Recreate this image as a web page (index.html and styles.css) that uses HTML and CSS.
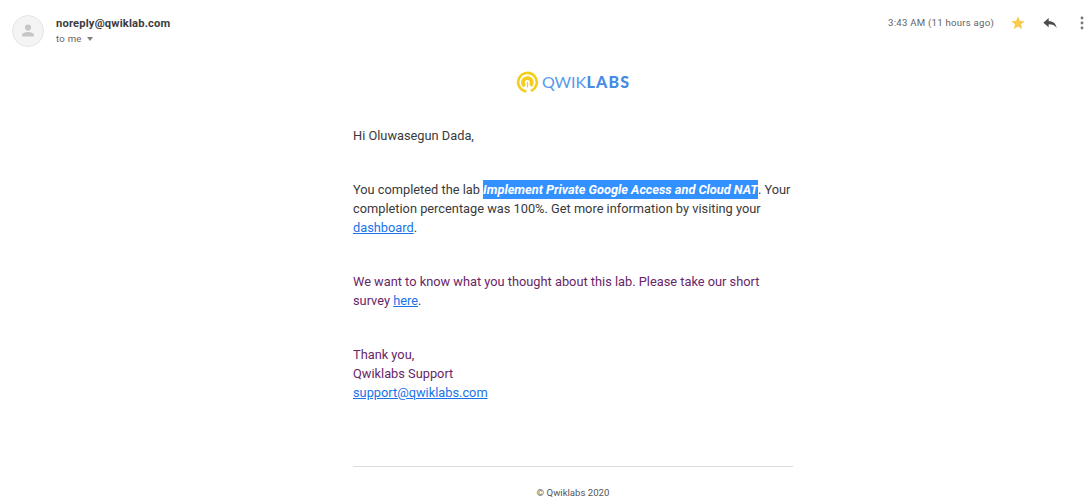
FILE: index.html
```html
<!DOCTYPE html>
<html lang="en">
<head>
<meta charset="utf-8">
<title>Lab completed</title>
<link rel="stylesheet" href="styles.css">
</head>
<body>
<header class="mail-header">
  <div class="avatar">
    <svg width="16" height="16" viewBox="0 0 16 16"><circle cx="8" cy="4.6" r="3.1"/><path d="M2 13.6v-1.3C2 10 5.5 9 8 9s6 1 6 3.300v1.300z"/></svg>
  </div>
  <div class="sender">
    <div class="address">noreply@qwiklab.com</div>
    <div class="recipient">to me <span class="caret"></span></div>
  </div>
  <div class="actions">
    <span class="time">3:43 AM (11 hours ago)</span>
    <svg class="star" width="16" height="16" viewBox="0 0 24 24"><path d="M12 17.270 18.180 21l-1.640-7.030L22 9.240l-7.190-.610L12 2 9.190 8.630 2 9.240l5.460 4.730L5.820 21z"/></svg>
    <svg class="reply" width="16" height="16" viewBox="0 0 24 24"><path d="M10 9V4.500L2 11.500l8 7V14c5.500 0 9.500 1.500 12 5.500C21 13.500 17.500 9.500 10 9z"/></svg>
    <svg class="more" width="4" height="16" viewBox="0 0 4 16"><circle cx="2" cy="3" r="1.450"/><circle cx="2" cy="8" r="1.450"/><circle cx="2" cy="13" r="1.450"/></svg>
  </div>
</header>
<main class="mail">
  <div class="logo">
    <svg width="114" height="24" viewBox="0 0 114 24">
      <path class="ring" d="M10.300 21.400A9.300 9.300 0 1 1 14.700 20.900"/>
      <path class="inner" d="M8.800 16A4.400 4.400 0 1 1 14.400 15.600"/>
      <path class="stem" d="M11.500 12V17.500"/>
      <text class="word" x="26" y="18" textLength="44">QWIK</text>
      <text class="word strong" x="70.500" y="18" textLength="42.500">LABS</text>
    </svg>
  </div>
  <p class="text">Hi Oluwasegun Dada,</p>
  <p class="text">You completed the lab <em class="lab">Implement Private Google Access and Cloud NAT</em>. Your<br>completion percentage was 100%. Get more information by visiting your<br><a class="link" href="#">dashboard</a>.</p>
  <p class="text quoted">We want to know what you thought about this lab. Please take our short<br>survey <a class="link" href="#">here</a>.</p>
  <p class="text quoted">Thank you,<br>Qwiklabs Support<br><a class="link" href="#">support@qwiklabs.com</a></p>
  <footer class="footer">© Qwiklabs 2020</footer>
</main>
</body>
</html>
```

FILE: styles.css
```css
body {
  margin: 0;
  height: 499px;
  overflow: hidden;
  background: #fff;
  font-family: Roboto, sans-serif;
  color: #3a3a3a;
}
.mail-header {
  display: flex;
  align-items: flex-start;
  height: 62px;
  padding: 15px 6px 0 12px;
  box-sizing: border-box;
}
.avatar {
  display: flex;
  align-items: center;
  justify-content: center;
  width: 32px;
  height: 32px;
  box-sizing: border-box;
  border: 1px solid #e6e6e6;
  border-radius: 50%;
  background: #f4f4f4;
}
.avatar svg { fill: #c6c6c6; }
.sender { margin-left: 12px; }
.address {
  padding-top: 1px;
  font-size: 11.200px;
  font-weight: 700;
  line-height: 15px;
  letter-spacing: 0.160px;
  color: #3c3c3f;
}
.recipient {
  display: flex;
  align-items: center;
  gap: 5px;
  font-size: 9.600px;
  line-height: 16px;
  letter-spacing: 0.250px;
  color: #666;
}
.caret {
  margin-top: -1px;
  border: 3.500px solid transparent;
  border-top: 4px solid #808080;
  border-bottom: 0;
}
.actions {
  display: flex;
  align-items: center;
  height: 16px;
  margin-left: auto;
}
.time {
  margin-top: -1px;
  font-size: 9.600px;
  letter-spacing: 0.250px;
  color: #5f6368;
}
.star { margin-left: 16px; fill: #f7cb4d; }
.reply { margin-left: 16px; fill: #4d4d4d; }
.more { margin-left: 22px; fill: #777; }
.mail {
  width: 440px;
  margin-left: 353px;
}
.logo {
  display: flex;
  height: 24px;
  padding: 8px 0 32px 163px;
}
.ring { fill: none; stroke: #f5cd1d; stroke-width: 2.600; }
.inner { fill: none; stroke: #f5cd1d; stroke-width: 3.800; }
.stem { stroke: #f5cd1d; stroke-width: 1.200; }
.word {
  font: 400 16px Lato, sans-serif;
  fill: #559aec;
}
.strong { font-weight: 900; fill: #478be6; }
.text {
  margin: 0 0 35px;
  font-size: 12.800px;
  line-height: 19px;
  white-space: nowrap;
}
.quoted { color: #682668; }
.lab {
  display: inline-block;
  font-weight: 700;
  letter-spacing: -0.022px;
  color: #fff;
  background: #3390ff;
}
.link { color: #1a73e8; text-decoration: underline; }
.footer {
  margin-top: 64px;
  padding-top: 18px;
  border-top: 1px solid #ddd;
  font-size: 9.600px;
  line-height: 15px;
  text-align: center;
  color: #555;
}
```
